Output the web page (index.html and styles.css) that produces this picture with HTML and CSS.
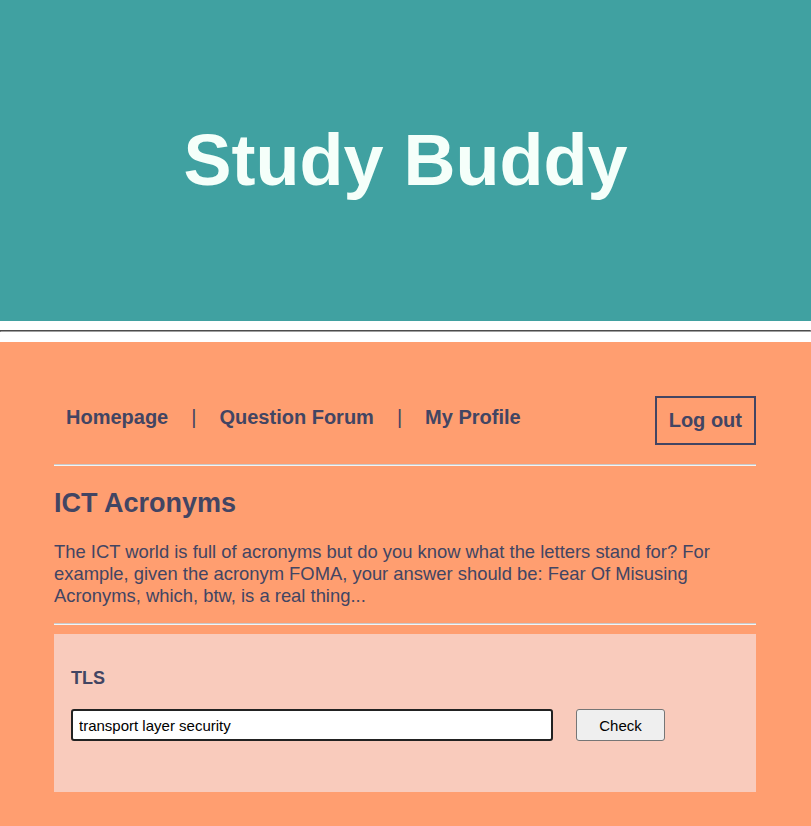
FILE: index.html
```html
<!DOCTYPE html>
<html lang="en">
<head>
<meta charset="utf-8">
<title>Study Buddy</title>
<link rel="stylesheet" href="styles.css">
</head>
<body>
<header class="banner">
  <h1 class="banner-title">Study Buddy</h1>
</header>
<hr class="page-rule">
<main class="main">
  <nav class="nav">
    <div class="nav-links">
      <a class="nav-link" href="#">Homepage</a>
      <span class="nav-sep">|</span>
      <a class="nav-link" href="#">Question Forum</a>
      <span class="nav-sep">|</span>
      <a class="nav-link" href="#">My Profile</a>
    </div>
    <a class="logout" href="#">Log out</a>
  </nav>
  <hr class="rule">
  <h2 class="title">ICT Acronyms</h2>
  <p class="intro">The ICT world is full of acronyms but do you know what the letters stand for? For example, given the acronym FOMA, your answer should be: Fear Of Misusing Acronyms, which, btw, is a real thing...</p>
  <hr class="rule rule-bottom">
  <section class="question">
    <div class="question-label">TLS</div>
    <form class="answer-row">
      <input class="answer-input" type="text" value="transport layer security">
      <button class="check-btn" type="button">Check</button>
    </form>
  </section>
</main>
</body>
</html>
```

FILE: styles.css
```css
* { box-sizing: border-box; }

html, body {
  margin: 0;
  padding: 0;
  background: #ffffff;
  font-family: "Liberation Sans", Arial, sans-serif;
}

.banner {
  height: 321px;
  background: #40a1a1;
  display: flex;
  align-items: center;
  justify-content: center;
}

.banner-title {
  margin: 0;
  font-size: 72px;
  font-weight: bold;
  color: #f5fffa;
  line-height: 1;
  padding-bottom: 2px;
}

.page-rule {
  margin: 9px 0 10px;
  border: 1px inset #a0a0a0;
  height: 0;
}

.main {
  background: #ff9e70;
  padding: 54px 55px 34px 54px;
  min-height: 484px;
  color: #424563;
}

.nav {
  display: flex;
  justify-content: space-between;
  align-items: flex-start;
}

.nav-links {
  display: flex;
  align-items: center;
  padding-top: 10px;
}

.nav-link {
  font-size: 20px;
  font-weight: bold;
  color: #424563;
  text-decoration: none;
  padding: 0 12px;
}

.nav-sep {
  font-size: 20px;
  margin: 0 11px;
  color: #424563;
}

.logout {
  font-size: 20px;
  font-weight: bold;
  color: #424563;
  text-decoration: none;
  border: 2px solid #424563;
  padding: 11px 12px;
  line-height: 23px;
}

.rule {
  margin: 19px 0 0;
  border: 0;
  border-top: 1px solid #c9c9c9;
  border-bottom: 1px solid #f4f4f4;
  height: 0;
}

.title {
  font-size: 27px;
  font-weight: bold;
  margin: 22px 0 0;
  line-height: 31px;
}

.intro {
  font-size: 18.4px;
  line-height: 22px;
  margin: 22px 0 0;
}

.rule-bottom {
  margin-top: 16px;
}

.question {
  margin-top: 9px;
  background: #f9cbbc;
  padding: 34px 17px 51px;
}

.question-label {
  font-size: 18px;
  font-weight: bold;
  line-height: 21px;
}

.answer-row {
  display: flex;
  align-items: center;
  gap: 23px;
  margin: 20px 0 0;
}

.answer-input {
  width: 482px;
  height: 32px;
  border: 2px solid #222222;
  border-radius: 3px;
  padding: 0 6px;
  font-family: "Liberation Sans", Arial, sans-serif;
  font-size: 15px;
  color: #000;
  background: #fff;
}

.check-btn {
  width: 89px;
  height: 32px;
  font-family: "Liberation Sans", Arial, sans-serif;
  font-size: 15px;
  color: #000;
  background: #efefef;
  border: 1px solid #767676;
  border-radius: 3px;
  padding: 0;
}
```
